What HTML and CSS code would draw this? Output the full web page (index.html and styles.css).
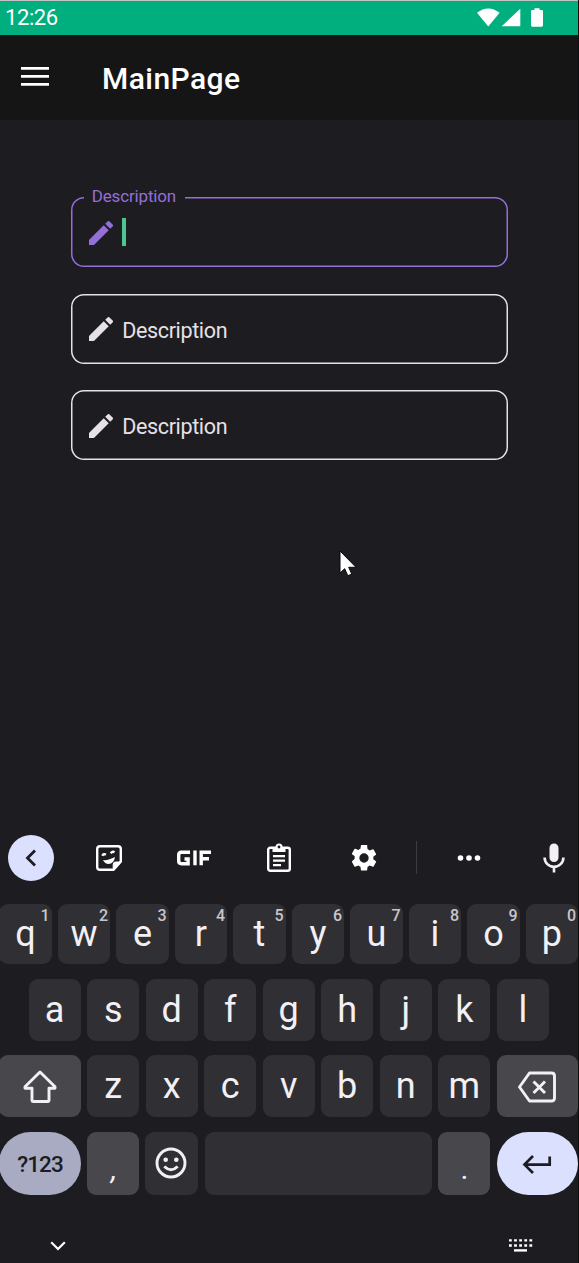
FILE: index.html
```html
<!DOCTYPE html>
<html lang="en">
<head>
<meta charset="utf-8">
<title>MainPage</title>
<link rel="stylesheet" href="styles.css">
</head>
<body>
<div class="screen">
  <header class="status">
    <span class="clock">12:26</span>
    <svg class="status-icons" width="68" height="20" viewBox="0 0 68 20" fill="#fff">
      <path d="M0 4.8Q11.3-4 22.600 4.800L11.300 18.500z"/>
      <path d="M43.300 .7V18.300H24.700z"/>
      <path d="M57.500 .3h5v1.700h2.200q1.300 0 1.300 1.300v14q0 1.400-1.300 1.400h-9.300q-1.400 0-1.400-1.400v-14q0-1.300 1.400-1.300h2.100z"/>
    </svg>
  </header>
  <div class="appbar">
    <svg width="28" height="19" viewBox="0 0 28 19" fill="#fff"><path d="M0 0h28v2.800H0zM0 8h28v2.800H0zM0 16h28v2.800H0z"/></svg>
    <h1 class="title">MainPage</h1>
  </div>
  <main class="form">
    <div class="field active">
      <span class="floating">Description</span>
      <svg class="pencil" viewBox="3 3 18 18"><path d="M3 17.250V21h3.750L17.810 9.940l-3.750-3.750zM20.710 7.040a1 1 0 0 0 0-1.410l-2.340-2.340a1 1 0 0 0-1.410 0l-1.830 1.830 3.750 3.750z"/></svg>
      <span class="caret"></span>
    </div>
    <div class="field">
      <svg class="pencil" viewBox="3 3 18 18"><path d="M3 17.250V21h3.750L17.810 9.940l-3.750-3.750zM20.710 7.040a1 1 0 0 0 0-1.410l-2.340-2.340a1 1 0 0 0-1.410 0l-1.830 1.830 3.750 3.750z"/></svg>
      <span class="label">Description</span>
    </div>
    <div class="field">
      <svg class="pencil" viewBox="3 3 18 18"><path d="M3 17.250V21h3.750L17.810 9.940l-3.750-3.750zM20.710 7.040a1 1 0 0 0 0-1.410l-2.340-2.340a1 1 0 0 0-1.410 0l-1.830 1.830 3.750 3.750z"/></svg>
      <span class="label">Description</span>
    </div>
  </main>
  <section class="keyboard">
    <div class="toolbar">
      <span class="tool back"><svg width="46" height="46" viewBox="0 0 46 46"><path d="M27 15.500l-7.500 7.500 7.500 7.500" fill="none" stroke="#1d1c21" stroke-width="2.800"/></svg></span>
      <span class="tool"><svg width="28" height="28" viewBox="0 0 28 28" fill="none" stroke="#fff" stroke-width="2.400">
        <path d="M5 2.200H23Q25.800 2.200 25.800 5V17.500L18.500 25.800H5Q2.200 25.800 2.200 23V5Q2.200 2.200 5 2.200z"/>
        <path d="M18.200 26v-5.500q0-2.500 2.500-2.500H26l-7 7.800z" fill="#fff" stroke-width="1"/>
        <path d="M8 16q5 .8 12-3-1 6.800-6.500 7Q10 20 8 16z" fill="#fff" stroke="none"/>
        <path d="M7.300 11.800q1.300-2.600 3.600-1M15.800 9.400q1.500-2.600 3.700-1.200"/>
      </svg></span>
      <span class="tool"><svg class="gif" width="36" height="16" viewBox="0 0 36 16" fill="none" stroke="#fff" stroke-width="3.400"><path d="M14 2.200H5.500Q2.700 2.200 2.700 5v6q0 2.700 2.800 2.700h6.600V9H8.500M19 .5v14.800M25.200 15.300V2.200H35M25 8.800h8"/></svg></span>
      <span class="tool"><svg width="26" height="30" viewBox="0 0 26 30" fill="none" stroke="#fff">
        <rect x="2.200" y="4.700" width="21.600" height="23" rx="2" stroke-width="2.400"/>
        <path d="M6.500 4h13v5h-13z" fill="#fff" stroke="none"/><circle cx="13" cy="4" r="2.500" fill="#1d1c21" stroke-width="2.200"/>
        <path d="M7 13.200h12M7 17.700h12M7 22.200h8" stroke-width="2.200"/>
      </svg></span>
      <span class="tool gear"><svg width="26" height="26" viewBox="2 2 20 20" fill="#fff"><path fill-rule="evenodd" d="M19.140 12.940c.04-.3.060-.61.060-.94s-.02-.64-.07-.94l2.030-1.580a.49.49 0 0 0 .12-.61l-1.920-3.320a.49.49 0 0 0-.59-.22l-2.390.96a7 7 0 0 0-1.620-.94l-.36-2.540A.48.48 0 0 0 13.920 2h-3.840a.47.47 0 0 0-.47.410l-.36 2.540c-.59.240-1.130.570-1.620.940l-2.390-.96a.48.48 0 0 0-.59.220L2.740 8.470a.48.48 0 0 0 .12.610l2.030 1.580c-.05.300-.09.630-.09.940s.02.640.07.940l-2.010 1.990a.49.49 0 0 0-.12.610l1.920 3.320c.12.220.37.290.59.220l2.390-.96c.5.380 1.030.700 1.620.940l.36 2.540c.05.240.24.410.48.410h3.840c.24 0 .44-.17.470-.41l.36-2.540a7 7 0 0 0 1.620-.94l2.390.96c.22.080.47 0 .59-.22l1.920-3.320a.47.47 0 0 0-.12-.61zM12 15.600A3.600 3.600 0 1 1 12 8.400a3.600 3.600 0 0 1 0 7.200z"/></svg></span>
      <span class="divider"></span>
      <span class="tool dots"><svg width="24" height="6" viewBox="0 0 24 6" fill="#fff"><circle cx="3.500" cy="3" r="2.800"/><circle cx="12" cy="3" r="2.800"/><circle cx="20.500" cy="3" r="2.800"/></svg></span>
      <span class="tool mic"><svg width="22" height="30" viewBox="0 0 22 30"><rect x="6.500" y=".5" width="9" height="18.500" rx="4.500" fill="#f3f0f5"/><path d="M1.600 14.500a9.400 9.400 0 0 0 18.800 0M11 23.500v6" fill="none" stroke="#f3f0f5" stroke-width="2.600"/></svg></span>
    </div>
    <div class="row first">
      <span class="key">q<sup>1</sup></span><span class="key">w<sup>2</sup></span><span class="key">e<sup>3</sup></span><span class="key">r<sup>4</sup></span><span class="key">t<sup>5</sup></span><span class="key">y<sup>6</sup></span><span class="key">u<sup>7</sup></span><span class="key">i<sup>8</sup></span><span class="key">o<sup>9</sup></span><span class="key">p<sup>0</sup></span>
    </div>
    <div class="row second">
      <span class="key">a</span><span class="key">s</span><span class="key">d</span><span class="key">f</span><span class="key">g</span><span class="key">h</span><span class="key">j</span><span class="key">k</span><span class="key">l</span>
    </div>
    <div class="row third">
      <span class="key wide tone"><svg width="36" height="34" viewBox="0 0 36 34" fill="none" stroke="#f3f0f5" stroke-width="2.900" stroke-linejoin="round"><path d="M18 2L33 16.800V18.300H27V30.500Q27 31.500 26 31.500H11Q10 31.500 10 30.500V18.300H3V16.800z"/></svg></span>
      <span class="key">z</span><span class="key">x</span><span class="key">c</span><span class="key">v</span><span class="key">b</span><span class="key">n</span><span class="key">m</span>
      <span class="key wide tone"><svg width="38" height="32" viewBox="0 0 38 32" fill="none" stroke="#f3f0f5" stroke-width="2.900" stroke-linejoin="round"><path d="M11.500 2H33.500Q36.500 2 36.500 5V27Q36.500 30 33.500 30H11.500L1.500 16z"/><path d="M15.500 10.500l11.500 11.500M27 10.500L15.500 22"/></svg></span>
    </div>
    <div class="row fourth">
      <span class="key wide symbols">?123</span>
      <span class="key tone punct"><span class="comma">,</span></span>
      <span class="key emoji"><svg width="32" height="32" viewBox="0 0 32 32" fill="none" stroke="#f3f0f5" stroke-width="2.900"><circle cx="16" cy="16" r="14"/><path d="M9.300 19.500q6.700 6.400 13.400 0"/><g fill="#f3f0f5" stroke="none"><circle cx="10.700" cy="12.800" r="2.300"/><circle cx="21.300" cy="12.800" r="2.300"/></g></svg></span>
      <span class="key space"></span>
      <span class="key tone punct">.</span>
      <span class="key wide enter"><svg width="30" height="20" viewBox="0 0 30 20" fill="none" stroke="#1d1c21" stroke-width="2.700"><path d="M27.700 2.500v8.100H3M11 2L2.500 10.600 11 19"/></svg></span>
    </div>
    <div class="navbar">
      <svg width="16" height="10" viewBox="0 0 16 10"><path d="M1.200 1.200L8 8l6.800-6.800" fill="none" stroke="#fff" stroke-width="2.200"/></svg>
      <svg width="24" height="13" viewBox="0 0 24 13" fill="none" stroke="#fff" stroke-width="2.400"><path d="M0 1.400h24M0 6.500h24" stroke-dasharray="2.800 2.300"/><path d="M5 11.400h13"/></svg>
    </div>
  </section>
  <svg class="pointer" width="19" height="28" viewBox="0 0 19 28"><path d="M1 1v22l4.700-4.300 3.100 7 4-1.600-3.100-6.800H17z" fill="#fff" stroke="#080809" stroke-width="1"/></svg>
</div>
</body>
</html>
```
FILE: styles.css
```css
* { box-sizing: border-box; }
body { margin: 0; background: #1d1c21; font-family: Roboto, "Liberation Sans", sans-serif; }
svg { display: block; flex: none; }
.screen { position: relative; width: 579px; height: 1263px; display: flex; flex-direction: column; overflow: hidden; border-right: 1px solid #0c0c0e; background: #1d1c21; }
.status { height: 35px; flex: none; display: flex; justify-content: space-between; padding: 0 33px 0 5px; border-top: 1px solid #bfc3c1; background: #00af7d; color: #fff; }
.clock { font-size: 22px; line-height: 34px; letter-spacing: -.4px; }
.status-icons { margin-top: 6.500px; }
.appbar { height: 85px; flex: none; display: flex; align-items: center; gap: 53px; padding-left: 21px; background: #151515; }
.appbar svg { margin-bottom: 2px; }
.title { margin: 3px 0 0; color: #fff; font-size: 30px; font-weight: 500; line-height: 40px; letter-spacing: .45px; }
.form { flex: none; display: flex; flex-direction: column; gap: 26.500px; padding: 77.200px 70px 0 70.700px; }
.field { position: relative; height: 70px; display: flex; align-items: center; gap: 9.500px; padding: 1px 18px 0; border-radius: 13px; box-shadow: inset 0 0 0 1.500px #e6e1e5; color: #e6e1e5; font-size: 21.500px; line-height: 28px; letter-spacing: -.35px; }
.label { padding-top: 3.500px; }
.pencil { width: 24px; height: 24px; fill: currentColor; }
.active { color: #946fda; box-shadow: inset 0 0 0 1.500px #946fda; }
.floating { position: absolute; top: -12.200px; left: 13px; padding: 0 9px 0 8px; background: #1d1c21; font-size: 17px; line-height: 22px; letter-spacing: -.15px; }
.caret { width: 4px; height: 28px; margin-bottom: 2px; background: #4dc591; }
.keyboard { margin-top: auto; height: 431px; flex: none; display: flex; flex-direction: column; }
.toolbar { height: 71.600px; flex: none; display: grid; grid-template-columns: 62px 93px 77px 93px 77px 29px 75px 96px; align-items: center; padding-bottom: 20px; }
.tool { display: flex; justify-content: center; }
.back svg { border-radius: 50%; background: #dce0ff; }
.gear { padding: 1px 0 0 1px; }
.gif, .dots svg { margin-top: 1px; }
.divider { width: 1px; height: 33px; margin-left: 14px; background: #3c3b40; }
.row { flex: none; display: flex; gap: 6.400px; height: 61.700px; margin-left: -.6px; }
.first { height: 60.800px; margin-bottom: 14.700px; }
.second { padding: 0 29.200px; margin-bottom: 14.700px; }
.third { margin-bottom: 14.700px; }
.fourth { height: 63px; }
.key { position: relative; flex: 1 1 0; display: flex; align-items: center; justify-content: center; border-radius: 9px; background: #303034; color: #f3f0f5; font-size: 36px; line-height: 42px; }
.key sup { position: absolute; top: 3px; right: 2px; color: #c8c5cd; font-size: 16px; font-weight: 500; line-height: 17px; }
.wide { flex: none; width: 81.300px; padding-top: 1.500px; }
.tone { background: #48474c; }
.symbols { border-radius: 32px; background: #a9abc3; color: #1d1c21; font-size: 22.500px; letter-spacing: -.9px; padding-top: 2px; font-weight: 500; }
.enter { border-radius: 32px; background: #dce0ff; }
.emoji { padding-right: 1px; }
.punct { font-size: 30px; padding-top: 12px; }
.comma { font-style: italic; padding-left: 2px; }
.space { flex: none; width: 227.400px; }
.navbar { flex: 1; display: flex; align-items: center; justify-content: space-between; padding: 34px 45px 0 50px; }
.pointer { position: absolute; left: 338.500px; top: 550px; }
```
